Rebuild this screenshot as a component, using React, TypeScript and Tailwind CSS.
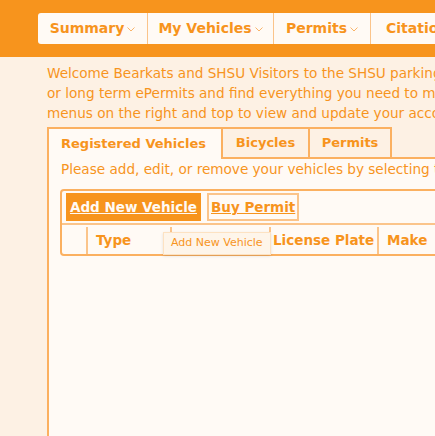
import React from "react";

const Chevron = () => (
    <svg width="8" height="5" viewBox="0 0 8 5" className="ml-[3px] mt-[2px]">
        <path d="M0.5 0.5 L4 4 L7.5 0.5" fill="none" stroke="#f9b46a" strokeWidth="1" />
    </svg>
)

const NavItem = ({label, w, chevron = true}: {label: string, w: string, chevron?: boolean}) => (
    <div className={`flex items-center justify-center h-full border-r border-[#fbc48a] shrink-0 ${w}`}>
        <span className="font-bold text-[14px] text-[#f7941d]">{label}</span>
        {chevron && <Chevron />}
    </div>
)

const App = () => {
    return (
        <div className="w-[435px] h-[436px] overflow-hidden bg-[#fdf1e4] text-[#f7941d]" style={{fontFamily: '"DejaVu Sans", Verdana, sans-serif'}}>
            <div className="h-[57px] bg-[#f7941d] pt-[13px] pl-[38px]">
                <div className="flex h-[31px] bg-[#fffaf5] rounded-tl-[3px] rounded-bl-[3px] w-[420px]">
                    <NavItem label="Summary" w="w-[110px]" />
                    <NavItem label="My Vehicles" w="w-[126px]" />
                    <NavItem label="Permits" w="w-[97px]" />
                    <div className="flex items-center pl-[15px] h-full">
                        <span className="font-bold text-[14px] text-[#f7941d] whitespace-nowrap">Citations</span>
                    </div>
                </div>
            </div>
            <div className="flex">
                <div className="w-[47px] shrink-0" />
                <div className="flex-1 min-w-0">
                    <p className="text-[13.6px] leading-[20px] mt-[6px] whitespace-nowrap">
                        Welcome Bearkats and SHSU Visitors to the SHSU parking portal.<br />
                        or long term ePermits and find everything you need to manage<br />
                        menus on the right and top to view and update your account.
                    </p>
                    <div className="mt-[4px] h-[320px] border-l-2 border-[#fbb060] bg-[#fffaf5] relative">
                        <div className="flex h-[32px] bg-[#fdf1e4]">
                            <div className="flex items-center px-[12px] w-[174px] border-t-2 border-r-2 border-[#fbb060] bg-[#fffaf5] font-bold text-[13px] whitespace-nowrap">Registered Vehicles</div>
                            <div className="flex items-center justify-center w-[87px] border-t-2 border-r-2 border-b-2 border-[#fbb060] font-bold text-[13px]">Bicycles</div>
                            <div className="flex items-center justify-center w-[82px] border-t-2 border-r-2 border-b-2 border-[#fbb060] font-bold text-[13px]">Permits</div>
                            <div className="flex-1 border-b-2 border-[#fbb060]" />
                        </div>
                        <p className="text-[13.6px] leading-[17px] pl-[12px] mt-[2px] whitespace-nowrap">Please add, edit, or remove your vehicles by selecting the vehicle</p>
                        <div className="ml-[11px] mt-[11px] w-[420px] h-[67px] border-2 border-[#fbb060] rounded-[4px]">
                            <div className="flex items-center gap-[6px] h-[34px] pl-[4px] border-b-2 border-[#fbc48a]">
                                <div className="h-[28px] px-[4px] flex items-center bg-[#f7941d] text-[#fffaf5] font-bold text-[13.5px] underline whitespace-nowrap">Add New Vehicle</div>
                                <div className="h-[28px] px-[2px] flex items-center border-2 border-[#fbc48a] font-bold text-[13.5px] underline whitespace-nowrap">Buy Permit</div>
                            </div>
                            <div className="flex h-[29px] font-bold text-[13.5px] pt-[2px]">
                                <div className="w-[26px] border-r-2 border-[#fbc48a]" />
                                <div className="w-[84px] border-r-2 border-[#fbc48a] flex items-center pl-[8px]">Type</div>
                                <div className="w-[99px] border-r-2 border-[#fbc48a]" />
                                <div className="w-[108px] border-r-2 border-[#fbc48a] flex items-center pl-[2px] whitespace-nowrap">License Plate</div>
                                <div className="flex items-center pl-[8px]">Make</div>
                            </div>
                        </div>
                        <div className="absolute left-[114px] top-[105px] h-[23px] px-[7px] flex items-center bg-[#fef5ea] border border-[#fde2c2] shadow-sm text-[11px] font-normal whitespace-nowrap">Add New Vehicle</div>
                    </div>
                </div>
            </div>
        </div>
    )
}

export default App
